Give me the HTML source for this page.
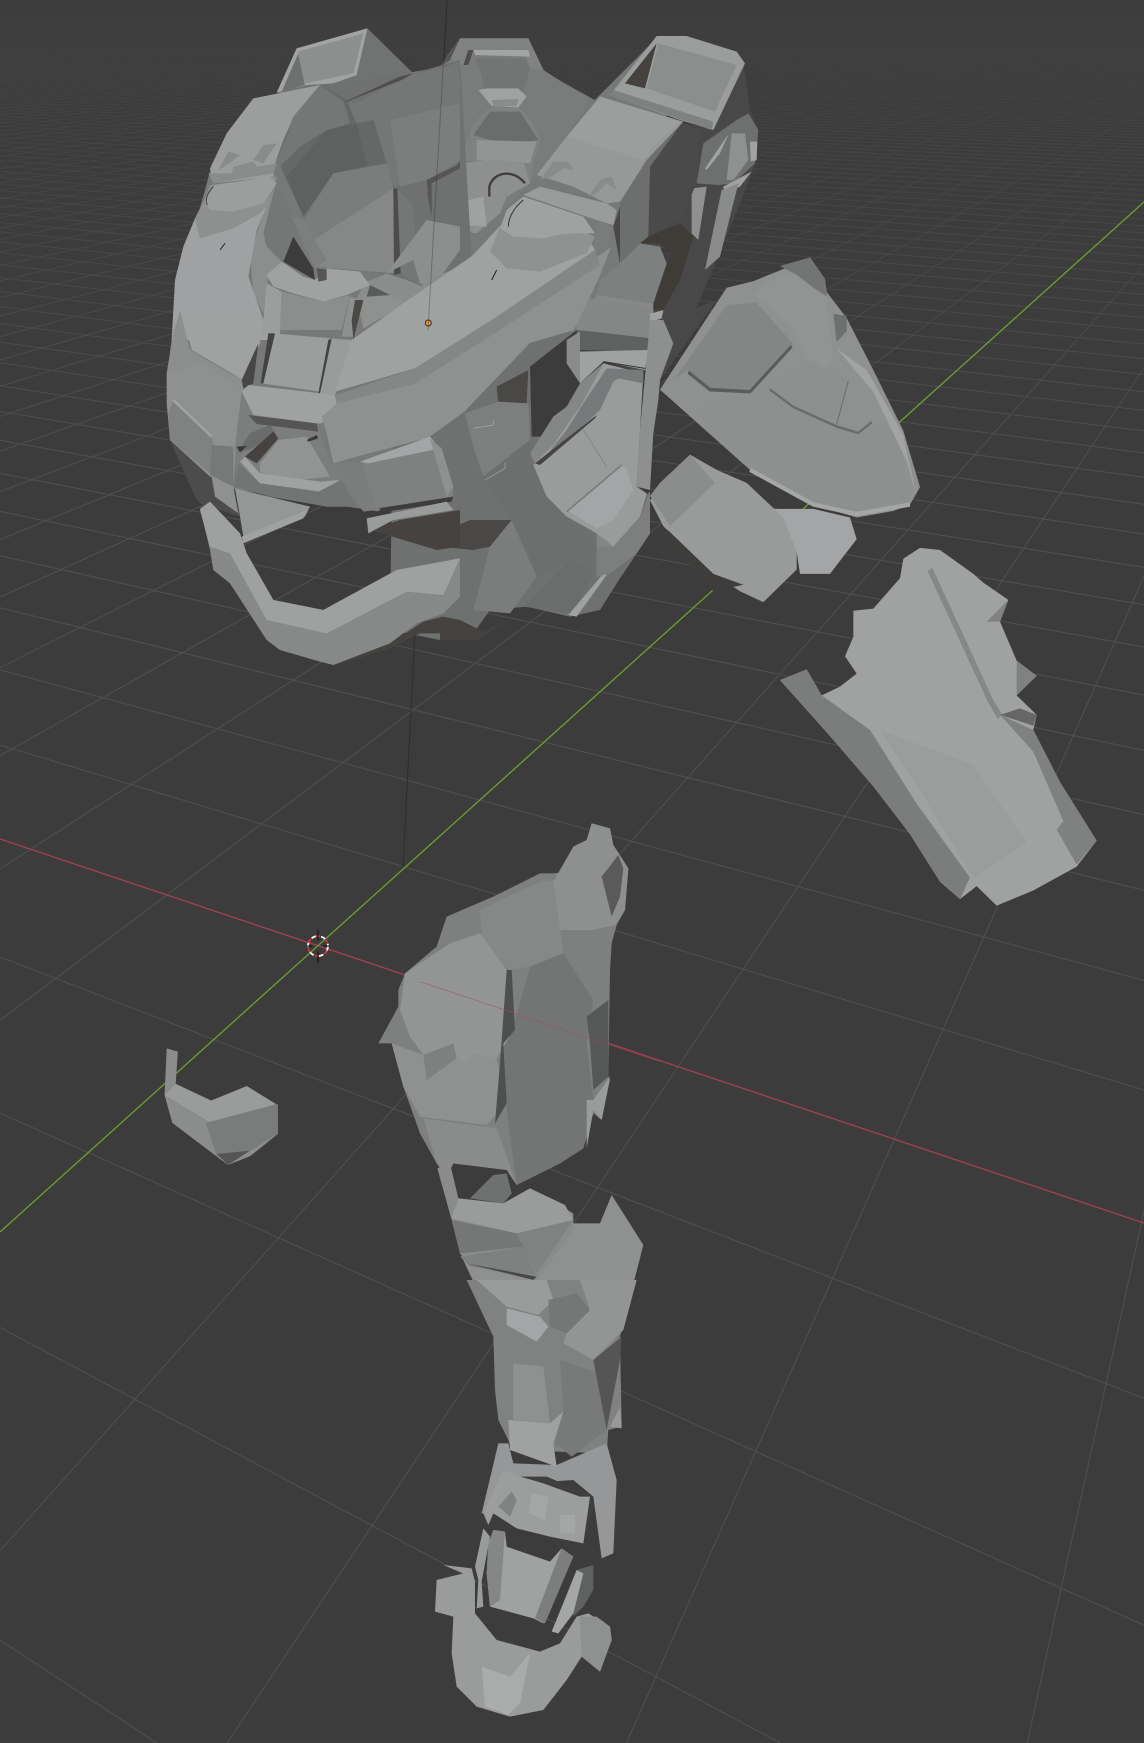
<!DOCTYPE html>
<html><head><meta charset="utf-8"><style>html,body{margin:0;padding:0;background:#3c3c3c;width:1144px;height:1743px;overflow:hidden}svg{display:block}</style></head><body>
<svg xmlns="http://www.w3.org/2000/svg" width="1144" height="1743" viewBox="0 0 1144 1743">
<defs><linearGradient id="f" x1="0" y1="0" x2="0" y2="1"><stop offset="0" stop-color="#3b3b3b" stop-opacity=".92"/><stop offset=".5" stop-color="#3b3b3b" stop-opacity=".45"/><stop offset="1" stop-color="#3b3b3b" stop-opacity="0"/></linearGradient></defs>
<rect width="1144" height="1743" fill="#3c3c3c"/>
<g id="grid" stroke="#505050" stroke-width="1" fill="none"></g>
<rect width="1144" height="480" fill="url(#f)"/>
<path d="M0 839 1144 1223" stroke="#a63f52" stroke-width="1.3" fill="none"/>
<path d="M0 1232 1144 202" stroke="#6f9e30" stroke-width="1.3" fill="none"/>
<path d="M447 0 403 867" stroke="#2e2e2e" stroke-width="1" fill="none"/>

<!-- base fill for helmet -->
<path transform="scale(1.1117)" d="M150 340 160 260 190 150 250 85 270 45 330 27 370 65 400 60 415 35 475 35 490 65 535 90 590 35 600 100 580 270 520 300 480 350 420 400 340 460 210 440 155 400z" fill="#777979"/>

<!-- B back: bowl and tower -->
<g transform="translate(440,20) scale(.33333)">
<path d="M0 140 60 55 265 55 310 150 450 240 380 350 290 460 260 500 180 580 100 630 0 640z" fill="#7a7c7c"/>
<path d="M20 110 60 55 265 55 310 150 270 145 255 90 90 90 70 135z" fill="#818383"/>
<path d="M0 140 60 55 30 120z" fill="#555"/>
<path d="M105 115 255 115 270 145 250 215 135 210 120 150z" fill="#737575"/>
<path d="M100 90 265 90 270 110 105 105z" fill="#a3a5a5"/>
<path d="M85 90 100 90 85 135 70 135z" fill="#4d4d4d"/>
<path d="M60 420 100 310 150 262 235 262 280 310 300 365 280 430 270 490 150 430z" fill="#808282"/>
<path d="M100 345 150 275 240 275 295 360 220 370 150 360z" fill="#6b6d6d"/>
<path d="M110 360 290 365 270 430 110 420z" fill="#939595"/>
<path d="M115 210 140 205 235 205 260 230 235 262 155 258z" fill="#a0a2a2"/>
<path d="M155 240 235 237 230 258 160 258z" fill="#8a8c8c"/>
<path d="M0 460 60 430 150 420 250 425 270 490 200 530 180 580 110 640 0 620z" fill="#8e9090"/>
<path d="M0 560 130 530 140 620 0 610z" fill="#a0a2a2"/>
<path d="M148 530V500C160 455 220 445 255 490" stroke="#3f3d3b" stroke-width="7" fill="none"/>
<path d="M72 485V530" stroke="#444" stroke-width="3" fill="none"/>
<!-- tower -->
<path d="M725 310 815 325 910 130 930 270 955 330 950 420 900 550 819 747 696 1032 630 1083 640 870 690 690 650 680 540 730 520 620 540 560z" fill="#484848"/>
<path d="M790 370 890 300 925 280 955 330 945 430 880 490 835 495 770 490z" fill="#6e7070"/>
<path d="M875 340 915 340 925 420 880 480 860 480z" fill="#8f9191"/>
<path d="M930 365 952 365 950 420 932 425z" fill="#a0a2a2"/>
<path d="M795 445 860 350 865 345 840 400 800 450z" fill="#a0a2a2"/>
<path d="M850 500 935 455 900 500 855 520z" fill="#a0a2a2"/>
<path d="M755 505 800 500 775 660 755 640z" fill="#8f9191"/>
<path d="M795 750 845 510 895 490 840 710z" fill="#8a8c8c"/>
<path d="M510 225 650 48 740 48 890 95 915 130 820 330 720 300z" fill="#9b9d9d"/>
<path d="M620 205 655 70 890 135 825 275z" fill="#8c8e8e"/>
<path d="M555 190 650 70 615 205z" fill="#44413f"/>
<path d="M510 225 520 210 820 305 815 330z" fill="#7f8181"/>
<path d="M725 310 780 330 770 490 720 600 625 650 630 440z" fill="#4a4a4a"/>
<path d="M725 310 620 420 540 550 540 730 625 650 630 440z" fill="#6d6f6f"/>
<path d="M640 870 690 700 660 670 600 670 625 650 720 610 760 650 720 780 670 870z" fill="#3f3b37"/>
<path d="M540 730 600 670 660 680 680 730 640 850 470 825 480 780z" fill="#7e8080"/>
<path d="M470 825 640 850 640 900 410 930z" fill="#878989"/>
<path d="M618 885 670 870 665 895 620 910z" fill="#a0a2a2"/>
</g>

<!-- A interior and left -->
<g transform="translate(160,20) scale(.33333)">
<path d="M350 218 410 85 622 25 760 160 570 240 480 195z" fill="#717373"/>
<path d="M350 218 410 85 622 25 590 165 520 190 440 195z" fill="#a2a4a4"/>
<path d="M415 100 365 215 435 195z" fill="#6f7171"/>
<path d="M415 95 610 40 580 160 435 190z" fill="#8d8f8e"/>
<path d="M480 195 760 160 900 120 940 800 700 780 460 660 380 470z" fill="#6f7171"/>
<path d="M590 250 730 170 860 140 900 125 900 440 800 480 700 500 680 430 640 300 590 310 555 245z" fill="#757776"/>
<path d="M690 300 860 260 900 250 900 420 800 480 720 500z" fill="#7c7e7e"/>
<path d="M400 300 480 195 560 240 590 310 640 300 680 430 520 460 430 590 375 470 350 410z" fill="#666868"/>
<path d="M400 300 480 195 550 245 570 310 500 330 420 380 385 340z" fill="#757777"/>
<path d="M380 470 500 330 590 310 620 435 520 460 430 590z" fill="#5f6161"/>
<path d="M430 600 520 460 680 430 700 505 460 660z" fill="#7b7d7d"/>
<path d="M460 660 700 505 705 760 470 740z" fill="#868888"/>
<path d="M712 510 755 550 785 800 722 760z" fill="#757777"/>
<path d="M700 505 712 505 722 760 702 765z" fill="#4c4c4c"/>
<path d="M555 245 720 170 760 160 725 180 560 245z" fill="#4f4d4b"/>
<path d="M800 480 890 435 900 425 900 445 815 490 815 590 805 540z" fill="#555"/>
<path d="M800 600 900 620 900 690 820 800 780 790 760 720 680 760z" fill="#8d8f8f"/>
<path d="M350 480 400 640 370 730 325 770 310 880 280 820 270 700 300 610z" fill="#8c8e8e"/>
<path d="M350 480 395 590 415 640 370 730 320 680 310 640z" fill="#757777"/>
<path d="M395 590 430 600 500 720 465 745z" fill="#7d7f7f"/>
<path d="M400 650 460 745 465 780 430 760 370 725z" fill="#3c3c3c"/>
<path d="M35 960 45 780 70 680 105 595 130 550 150 500 350 470 320 560 290 630 265 770 300 870 330 960z" fill="#9fa1a2"/>
<path d="M105 595 130 545 150 495 350 470 320 560 300 580 220 625 120 655z" fill="#8e9090"/>
<path d="M135 545 165 495 330 470 350 490 310 550 220 575 150 570z" fill="#9c9e9e"/>
<path d="M160 500C140 520 135 540 142 555" stroke="#444" stroke-width="3" fill="none"/>
<path d="M150 445 200 340 280 235 480 195 400 290 370 360 345 430 340 470 160 490z" fill="#9c9e9e"/>
<path d="M480 195 550 245 570 310 500 330 420 380 360 440 350 420 385 340 400 290z" fill="#757777"/>
<path d="M145 460 160 490 340 460 350 430 290 440 280 425 220 440 215 460z" fill="#8a8c8c"/>
<path d="M175 450 205 395 240 405 195 440z" fill="#8a8c8c"/>
<path d="M280 420 310 375 350 370 310 430z" fill="#8a8c8c"/>
<path d="M180 690 195 670" stroke="#222" stroke-width="3" fill="none"/>
<path d="M610 790 680 760 740 780 785 800 800 780 900 740 900 800 700 860 610 925 590 840z" fill="#8b8d8d"/>
<path d="M610 820 690 830 740 850 610 925z" fill="#8f9191"/>
<path d="M630 795 620 830 690 825 640 800z" fill="#5a5c5c"/>
<path d="M320 790 365 815 360 950 305 950z" fill="#9c9e9e"/>
<path d="M320 765 365 725 430 770 465 780 500 745 600 755 630 795 560 825 490 845 400 820 340 800z" fill="#a0a2a2"/>
<path d="M365 815 490 845 570 825 545 930 360 930z" fill="#8c8e8e"/>
<path d="M570 830 610 840 580 950 545 950z" fill="#8e9090"/>
<path d="M585 840 610 840 580 960 575 900z" fill="#4b4946"/>
<path d="M470 745 500 748 500 780 475 785z" fill="#555"/>
</g>

<!-- B front strap -->
<g transform="translate(440,20) scale(.33333)">
<path d="M290 465 380 350 480 230 730 305 620 420 540 545 500 550 400 500z" fill="#979999"/>
<path d="M380 350 480 230 720 305 650 370 610 420z" fill="#9c9e9e"/>
<path d="M250 525 300 500 500 550 530 570 520 615 470 600z" fill="#9a9c9c"/>
<path d="M300 480 340 425 385 425 400 450 370 445 335 470z" fill="#8a8c8c"/>
<path d="M445 530 480 480 515 470 530 510 500 490 470 520z" fill="#8a8c8c"/>
<path d="M470 600 520 620 470 780 460 720z" fill="#7a7c7c"/>
</g>

<!-- D skirt -->
<g transform="translate(440,320) scale(.33333)">
<path d="M-140 130 0 120 250 0 400 0 380 100 290 130 300 320 380 590 470 640 630 515 630 640 590 700 530 790 480 870 390 890 260 860 150 870 100 940 0 960 -150 930z" fill="#6f7171"/>
<path d="M270 140 410 30 415 180 330 350 275 350z" fill="#3c3c3c"/>
<path d="M170 200 265 150 260 250 175 250z" fill="#4a4846"/>
<path d="M75 280 175 245 265 250 270 360 130 470 100 380z" fill="#7d7f7f"/>
<path d="M130 470 270 360 275 430 380 590 470 680 470 760 390 720 290 770 215 600z" fill="#6d6f6f"/>
<path d="M0 640 90 600 215 600 150 680 100 690 0 680z" fill="#4a4846"/>
<path d="M150 680 215 600 290 770 210 880 100 870z" fill="#7b7d7d"/>
<path d="M250 860 390 720 465 760 395 880z" fill="#6b6d6d"/>
<path d="M480 770 560 720 520 790 480 870z" fill="#6f7171"/>
<path d="M470 640 520 680 600 600 590 700 560 720 500 750 470 770z" fill="#858787"/>
<path d="M385 885 495 755 500 765 410 890z" fill="#a0a2a2"/>
<path d="M0 890 60 900 130 935 240 880 170 920 120 960 0 960z" fill="#44413f"/>
<path d="M100 325 160 315 160 300M135 480 195 445 195 428" stroke="#aaa" stroke-width="2" fill="none"/>
<path d="M410 -70 630 -40 630 55 410 30z" fill="#858787"/>
<path d="M410 30 630 55 625 95 410 90z" fill="#5f6161"/>
<path d="M415 95 625 90 615 150 490 125 420 190z" fill="#a0a2a2"/>
<path d="M490 125 615 145" stroke="#333" stroke-width="3" fill="none"/>
<path d="M670 0 830 -60 660 180 700 70z" fill="#484848"/>
<path d="M630 0 670 0 700 70 660 180 655 240 640 340 630 510 590 500 600 330 615 170z" fill="#8e9090"/>
<path d="M380 60 420 35 420 190 380 130z" fill="#8a8c8c"/>
<path d="M270 400 340 290 380 260 420 190 490 130 420 260 360 370 285 430z" fill="#858787"/>
<path d="M280 435 340 375 420 260 490 130 610 160 600 330 590 500 620 520 600 590 520 680 470 640 380 590 320 530z" fill="#9a9c9c"/>
<path d="M300 430 360 380 480 270 520 185 535 175 610 190 610 150 500 145 430 250 380 330z" fill="#77797a"/>
<path d="M285 430 470 285 465 295 300 435z" fill="#444"/>
<path d="M380 570 545 435 560 445 580 510 520 600 470 625z" fill="#a3a5a6"/>
<path d="M380 575 545 435" stroke="#7a7c7c" stroke-width="5" fill="none"/>
<path d="M430 330 500 440" stroke="#7a7c7c" stroke-width="2" fill="none"/>
<path d="M600 590 630 515 630 640 590 700 510 760 470 770 470 680 520 680z" fill="#7d7f7f"/>
</g>

<!-- C front left -->
<g transform="translate(160,320) scale(.33333)">
<path d="M30 360 150 470 220 510 240 590 120 550 105 530z" fill="#4c4c4c"/>
<path d="M155 470 220 500 235 580 165 530z" fill="#8f9191"/>
<path d="M225 505 450 560 435 590 250 650 240 590z" fill="#959797"/>
<path d="M245 650 440 570 430 595 250 670z" fill="#a0a2a2"/>
<path d="M155 745 200 780 215 795 160 755z" fill="#3f3d3b"/>
<path d="M520 1035 690 970 790 905 850 890 900 900 900 960 840 940 780 940 690 985 530 1035z" fill="#45423f"/>
<path d="M120 565 150 545 240 640 260 700 340 840 490 870 710 750 900 715 900 830 850 880 770 910 690 970 520 1035 480 1025 360 990 320 960 210 790 160 750 150 690z" fill="#878989"/>
<path d="M120 570 150 545 240 640 260 700 340 840 490 870 710 750 900 715 850 825 740 815 500 940 320 900 210 700 150 680z" fill="#9fa1a1"/>
<path d="M20 160 90 100 250 180 250 210 230 370 220 500 150 470 30 360 20 250z" fill="#8f9191"/>
<path d="M40 240 155 350 160 375 150 460 30 360 25 280z" fill="#808282"/>
<path d="M40 240 155 350" stroke="#a0a2a2" stroke-width="8" fill="none"/>
<path d="M155 375 220 380 220 500 150 465z" fill="#777979"/>
<path d="M70 -10 95 90 250 180 300 70 295 -10z" fill="#a0a2a2"/>
<path d="M20 160 40 40 60 -30 90 90 245 180 245 205 130 130z" fill="#8d8f8f"/>
<path d="M245 180 295 70 280 190 250 205z" fill="#464646"/>
<path d="M225 380 245 215 280 285 470 310 510 420 550 480 590 560 500 560 350 530 230 505z" fill="#7c7e7e"/>
<path d="M265 285 470 310 475 335 290 312z" fill="#555"/>
<path d="M235 395 270 340 330 315 350 345 265 390z" fill="#6a6c6c"/>
<path d="M300 430 355 360 440 350 510 470 410 480 300 460z" fill="#929494"/>
<path d="M255 410 340 335 355 355 290 430z" fill="#45423f"/>
<path d="M240 425 255 410 300 460 480 485 540 480 480 515 300 490z" fill="#a0a2a2"/>
<path d="M235 430 300 490 475 515 545 480 590 560 500 560 330 530 225 500z" fill="#737575"/>
<path d="M440 360 470 345 475 355 445 365zM230 380 260 378 240 398z" fill="#383838"/>
<path d="M340 40 515 55 480 215 305 190z" fill="#9c9e9e"/>
<path d="M325 40 345 40 310 190 302 190z" fill="#424242"/>
<path d="M515 55 575 60 560 130 525 225 480 220z" fill="#9a9c9c"/>
<path d="M515 55 480 220 475 220 505 60z" fill="#424242"/>
<path d="M245 215 265 195 525 225 530 250 485 310 470 310 280 285z" fill="#a0a2a2"/>
<!-- front ring: band, edge, top -->
<path d="M485 290 530 250 765 190 1011 35 1353 -219 1317 -126 1242 30 1110 69 912 276 804 354 606 405 520 430 500 340z" fill="#8f9191"/>
<path d="M525 215 575 60 730 -50 936 -192 1023 -285 1240 -320 1305 -210 1011 -10 765 145z" fill="#a0a2a2"/>
<path d="M528 225 765 145 1011 -10 1305 -210 1320 -165 1011 35 765 190 530 250z" fill="#858787"/>
<path d="M605 430 810 355 880 500 880 540 650 570z" fill="#7f8181"/>
<path d="M600 425 810 350 840 385 625 430z" fill="#a3a5a6"/>
<path d="M810 355 845 385 880 500 860 530z" fill="#8f9191"/>
<path d="M520 430 605 425 650 570 610 575 545 480z" fill="#7b7d7d"/>
<path d="M630 630 830 690 900 680 900 570 720 600z" fill="#45423f"/>
<path d="M655 565 880 530 875 545 680 575z" fill="#3f3d3b"/>
<path d="M620 595 860 545 880 570 700 600 625 640z" fill="#9a9c9c"/>
</g>

<!-- dome -->
<g transform="translate(440,20) scale(.33333)">
<path d="M150 695 180 620 220 650 310 655 420 630 465 650 440 700 300 755 200 745z" fill="#909292"/>
<path d="M180 625 200 570 250 530 430 590 465 640 400 640 310 650 220 650z" fill="#a0a2a2"/>
<path d="M205 620C205 590 225 560 250 540" stroke="#333" stroke-width="3" fill="none"/>
<path d="M155 780 170 750" stroke="#222" stroke-width="3" fill="none"/>
</g>
<circle cx="428.3" cy="323" r="3" fill="#e8902a" stroke="#333" stroke-width="1"/>
<path d="M447 0 428 330" stroke="#2e2e2e" stroke-width="1" opacity=".35" fill="none"/>

<!-- shield, fist, forearm -->
<g transform="translate(640,240) scale(.33333,.43365)">
<path d="M400 620 520 620 630 640 650 690 570 770 480 770 470 720z" fill="#a3a5a6"/>
<path d="M30 600 150 495 230 530 320 560 430 640 470 720 470 760 370 835 300 810 220 770 70 660z" fill="#999b9b"/>
<path d="M30 590 60 560 150 495 225 560 90 660z" fill="#8b8d8d"/>
<path d="M60 680 85 670 220 770 310 795 220 810 150 750z" fill="#3f3d3b"/>
<path d="M60 345 260 110 340 95 420 70 510 40 555 90 560 120 620 180 700 300 790 440 840 570 810 610 760 625 650 640 520 610 330 530z" fill="#8f9191"/>
<path d="M165 410 240 360 330 355 410 320 510 280 620 320 590 420 660 450 700 420 780 450 810 600 620 625 400 560z" fill="#8e9090"/>
<path d="M105 320 260 150 350 145 460 240 330 350 210 350 140 300z" fill="#848686"/>
<path d="M340 125 420 80 500 70 555 110 560 160 580 265 560 295 500 270 460 200 380 150z" fill="#929494"/>
<path d="M420 60 510 40 555 90 560 130 520 110 470 80z" fill="#737575"/>
<path d="M580 170 620 175 620 210 590 235z" fill="#6e7070"/>
<path d="M145 305 210 345 330 350 455 245" stroke="#5a5c5c" stroke-width="8" fill="none"/>
<path d="M390 345 460 385 590 430 655 445 695 420" stroke="#6a6c6c" stroke-width="6" fill="none"/>
<path d="M625 325 590 425" stroke="#6a6c6c" stroke-width="3" fill="none"/>
<path d="M590 250 700 350 800 510 830 590 790 450 680 300z" fill="#a2a4a4"/>
<path d="M330 530 520 610 650 632 810 610" stroke="#a5a7a7" stroke-width="10" fill="none"/>
<path d="M420 1015 500 990 545 1050 600 1030 650 1000 615 960 640 915 640 855 700 850 780 780 790 735 840 710 900 715 1000 770 1030 790 1105 830 1080 880 1130 970 1190 1005 1130 1050 1190 1095 1180 1130 1260 1250 1370 1385 1310 1445 1180 1500 1070 1535 1010 1490 960 1520 900 1480 810 1370 700 1260 560 1135z" fill="#a0a2a2"/>
<path d="M420 1015 500 990 545 1050 690 1130 830 1300 990 1470 960 1520 900 1480 810 1370 700 1260 560 1135z" fill="#7b7d7d"/>
<path d="M1080 1095 1180 1130 1260 1250 1370 1385 1310 1440 1250 1360 1270 1340 1180 1180z" fill="#7f8181"/>
<path d="M1040 880 1105 830 1080 880 1045 880z" fill="#808282"/>
<path d="M1130 1050 1190 1005 1130 970z" fill="#808282"/>
<path d="M870 760 930 860 1050 1060 1080 1100" stroke="#868888" stroke-width="16" fill="none"/>
<path d="M1080 1095 1140 1080 1190 1095 1180 1120z" fill="#666"/>
<path d="M720 1130 1000 1210 1160 1390 1000 1470 840 1270z" fill="#9b9d9d"/>
</g>

<!-- chest -->
<g transform="translate(360,810) scale(.33333)">
<path d="M305 1340 380 1500 640 1500 800 1500 850 1305 755 1155 720 1240 640 1240 520 1400z" fill="#8f9191"/>
<path d="M55 700 115 590 115 540 135 490 230 410 260 320 400 260 540 190 580 190 620 185 640 110 680 90 695 40 750 55 760 105 805 175 795 300 770 345 755 400 750 480 745 800 750 810 725 930 700 910 670 1015 600 1060 470 1125 440 1080 280 1060 260 1100 230 1060 180 970 130 830 95 700z" fill="#7e8080"/>
<path d="M580 215 640 110 680 90 695 40 750 55 760 105 805 175 795 300 765 345 700 360 600 360z" fill="#8e9090"/>
<path d="M725 200 775 135 790 175 780 260 755 320z" fill="#5a5a5a"/>
<path d="M360 300 540 215 580 210 610 430 510 470 450 480 400 440 365 375z" fill="#868888"/>
<path d="M510 470 610 430 700 570 680 700 700 870 670 1015 600 1060 470 1125 440 900 430 700 460 650z" fill="#737575"/>
<path d="M680 620 745 570 745 800 700 840 690 700z" fill="#565757"/>
<path d="M680 870 700 870 750 800 725 930 700 900 680 1015z" fill="#9a9c9c"/>
<path d="M95 700 190 735 200 810 290 745 340 730 410 745 440 880 380 945 180 920 130 830z" fill="#8f9191"/>
<path d="M135 490 270 400 360 370 440 480 460 660 410 745 340 730 320 755 290 745 280 700 190 735 150 680 120 600z" fill="#939595"/>
<path d="M440 480 455 480 465 660 430 700 440 880 405 940 420 760z" fill="#4e4f4f"/>
<path d="M190 925 410 955 470 1125 440 1080 280 1060 260 1100 230 1060z" fill="#8a8c8c"/>
<path d="M330 1165 400 1095 440 1090 455 1150 430 1180z" fill="#6f7171"/>
<path d="M232 1075 270 1060 295 1165 275 1230z" fill="#8a8c8c"/>
<path d="M295 1165 430 1180 510 1135 640 1210 640 1260 530 1410 330 1370 300 1330 275 1230z" fill="#8a8c8c"/>
<path d="M295 1165 430 1180 510 1135 615 1185 640 1230 470 1270 275 1225z" fill="#9a9c9c"/>
<path d="M275 1230 470 1270 490 1310 300 1330z" fill="#757777"/>
<path d="M470 1270 640 1230 530 1390 490 1310z" fill="#808282"/>
<path d="M300 1340 490 1310 530 1395 330 1370z" fill="#7f8181"/>
<path d="M320 1360 520 1410 590 1340 530 1400z" fill="#484848"/>
<path d="M180 515 900 755" stroke="#a04a5a" stroke-width="2" opacity=".7" fill="none"/>
</g>

<!-- shin + foot -->
<g transform="translate(400,1280) scale(.33333)">
<path d="M200 0 280 170 285 330 295 420 325 480 335 510 620 520 625 450 665 440 660 170 705 0z" fill="#808282"/>
<path d="M540 0 710 0 670 150 580 240 490 190 500 160 570 90z" fill="#939595"/>
<path d="M230 0 440 0 460 60 415 105 320 80z" fill="#9a9c9c"/>
<path d="M320 135 410 185 445 140 420 110 320 85z" fill="#a3a5a6"/>
<path d="M445 60 530 40 570 90 500 160 450 140z" fill="#757777"/>
<path d="M340 250 430 260 450 430 340 420z" fill="#8f9191"/>
<path d="M480 240 600 280 620 450 515 530 465 490 490 390z" fill="#787a7a"/>
<path d="M580 240 665 170 660 240 620 450z" fill="#555"/>
<path d="M630 440 660 380 665 445z" fill="#999"/>
<path d="M245 700 295 490 325 490 340 550 470 555 620 490 650 600 640 820 605 835 580 650 520 600 370 610 290 700z" fill="#959798"/>
<path d="M325 420 450 430 490 395 460 490 470 560 330 510z" fill="#a0a2a2"/>
<path d="M360 590 440 590 560 640 580 680 555 780 570 650 500 630z" fill="#3f3f3f"/>
<path d="M265 735 250 700 310 570 360 590 430 610 540 650 570 650 550 790 450 770 350 745 280 700z" fill="#9c9e9e"/>
<path d="M295 680 335 635 350 660 330 710z" fill="#808282"/>
<path d="M395 640 445 650 435 720 385 700z" fill="#a5a7a7"/>
<path d="M480 705 525 705 525 760 480 760z" fill="#a5a7a7"/>
<path d="M265 790 280 750 315 755 320 800 450 845 485 805 520 830 430 1030 400 1015 270 980 260 880z" fill="#a0a2a2"/>
<path d="M485 805 520 830 435 1030 405 1015z" fill="#7c7e7e"/>
<path d="M265 790 280 750 315 755 300 960 270 980 260 880z" fill="#858787"/>
<path d="M225 860 250 745 270 770 245 905 250 980 230 985 235 900z" fill="#9a9c9c"/>
<path d="M530 870 580 855 580 930 550 980 520 1010z" fill="#5f6060"/>
<path d="M455 1055 530 870 550 880 520 1000 475 1060z" fill="#a5a7a7"/>
<path d="M190 880 130 855 215 865 225 905 225 1000 290 1080 420 1115 480 1090 530 1010 565 1000 630 1040 635 1080 600 1175 545 1130 500 1200 430 1290 330 1310 230 1280 170 1220 155 1120 160 1010 105 995 110 900z" fill="#9a9c9c"/>
<path d="M540 1010 590 1010 630 1040 635 1080 600 1175 545 1130z" fill="#8f9191"/>
<path d="M245 1160 330 1190 390 1120 360 1270 325 1305 255 1280z" fill="#aaacac"/>
</g>

<!-- small chunk and 3D cursor -->
<g transform="scale(1.1117)">
<path d="M150 943 160 946 158 975 190 990 222 977 248 993 250 1020 225 1040 205 1048 155 1010 148 985z" fill="#8b8d8d"/>
<path d="M148 985 158 975 190 990 222 977 248 993 190 1010z" fill="#9a9c9c"/>
<path d="M185 1010 250 993 250 1020 225 1035 195 1040z" fill="#7a7c7c"/>
<path d="M195 1038 225 1035 205 1048z" fill="#555"/>
<circle cx="286" cy="851" r="9" fill="none" stroke="#fff" stroke-width="1.6" stroke-dasharray="5 4"/>
<circle cx="286" cy="851" r="9" fill="none" stroke="#d33" stroke-width="1.6" stroke-dasharray="4 5" stroke-dashoffset="5"/>
<path d="M286 836V846M286 856V866M276 851H281M291 851H296" stroke="#111" stroke-width="1"/>
</g>
</svg>
<script>
(function(){var g=.0562,h=.0862,R=[-2520,-15],G=[1420,-46],O=[318,946],W=1144,H=1743;
function p(u,v){var d=g*u+h*v+1;return[(g*R[0]*u+h*G[0]*v+O[0])/d,(g*R[1]*u+h*G[1]*v+O[1])/d]}
function c(a,b){var t0=0,t1=1,dx=b[0]-a[0],dy=b[1]-a[1],P=[-dx,dx,-dy,dy],Q=[a[0],W-a[0],a[1],H-a[1]];
for(var k=0;k<4;k++){if(P[k]==0){if(Q[k]<0)return'';continue}var r=Q[k]/P[k];if(P[k]<0){if(r>t1)return'';if(r>t0)t0=r}else{if(r<t0)return'';if(r<t1)t1=r}}
return 'M'+(a[0]+t0*dx).toFixed(1)+' '+(a[1]+t0*dy).toFixed(1)+'L'+(a[0]+t1*dx).toFixed(1)+' '+(a[1]+t1*dy).toFixed(1)}
var d='',i,m;
for(i=-60;i<=500;i++){if(i==0)continue;m=(.02-1-h*i)/g;d+=c(p(m,i),p(900,i))}
for(i=-60;i<=500;i++){if(i==0)continue;m=(.02-1-g*i)/h;d+=c(p(i,m),p(i,900))}
var P=document.createElementNS('http://www.w3.org/2000/svg','path');P.setAttribute('d',d);document.getElementById('grid').appendChild(P)})();
</script>
</body></html>
